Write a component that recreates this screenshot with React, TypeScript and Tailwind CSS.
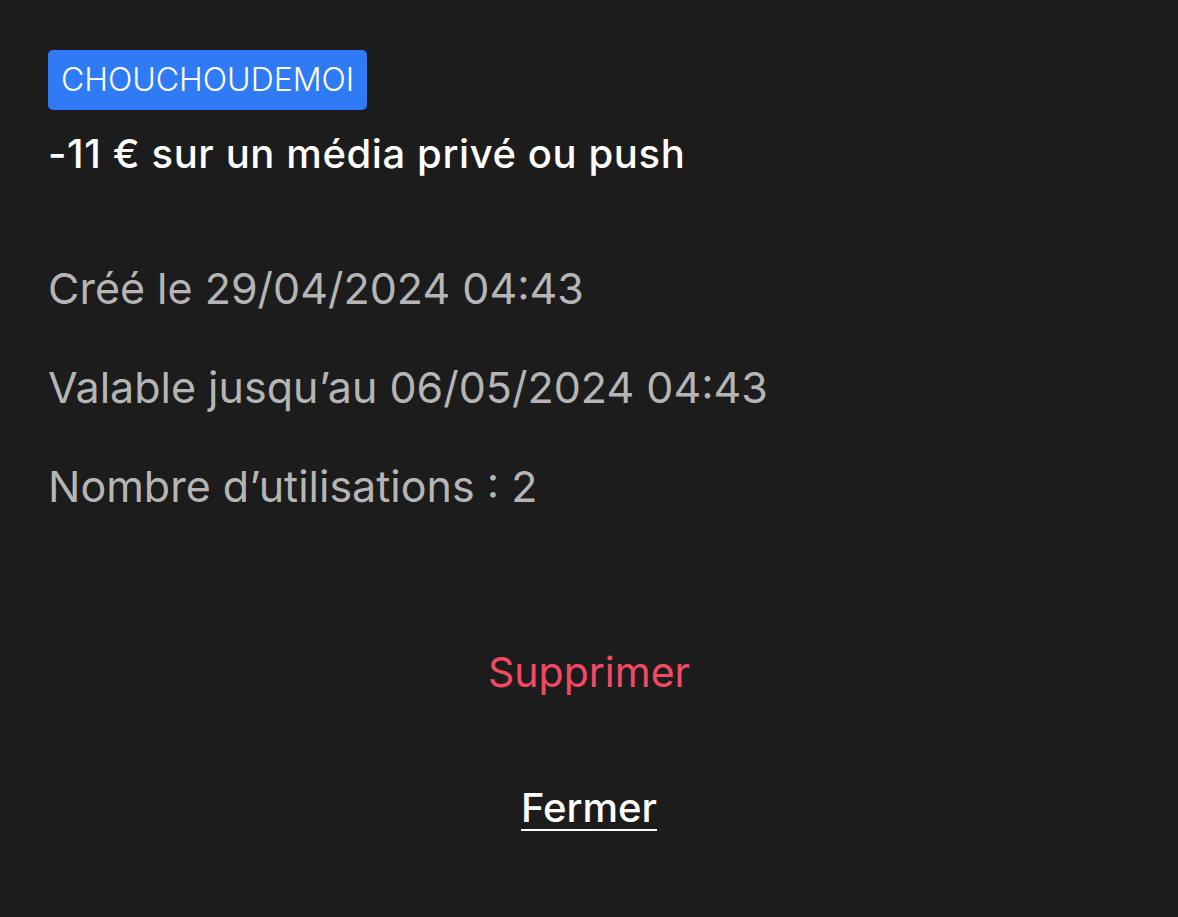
export default function App() {
  const lines = [
    "Créé le 29/04/2024 04:43",
    "Valable jusqu’au 06/05/2024 04:43",
    "Nombre d’utilisations : 2",
  ];

  return (
    <div className="min-h-[917px] bg-[#1c1c1c] font-['Inter',sans-serif] px-12 pt-[50px]">
      <div className="inline-flex h-[60px] items-center rounded-[5px] bg-[#2f7bf6] px-[13px] text-[32px] font-light text-white">
        CHOUCHOUDEMOI
      </div>
      <h1 className="mt-[22px] text-[40px] font-medium leading-[44px] tracking-[0.6px] text-white">
        -11 € sur un média privé ou push
      </h1>

      <div className="mt-[87px] flex flex-col gap-[49px]">
        {lines.map((line) => (
          <p key={line} className="text-[43px] leading-[50px] text-[#b5b5b5]">
            {line}
          </p>
        ))}
      </div>

      <div className="mt-[136px] flex flex-col items-center gap-[86px]">
        <button className="text-[41px] leading-[50px] text-[#f24a63]">Supprimer</button>
        <button className="text-[40px] font-medium leading-[50px] text-white underline underline-offset-[7px] decoration-[2px]">
          Fermer
        </button>
      </div>
    </div>
  );
}
